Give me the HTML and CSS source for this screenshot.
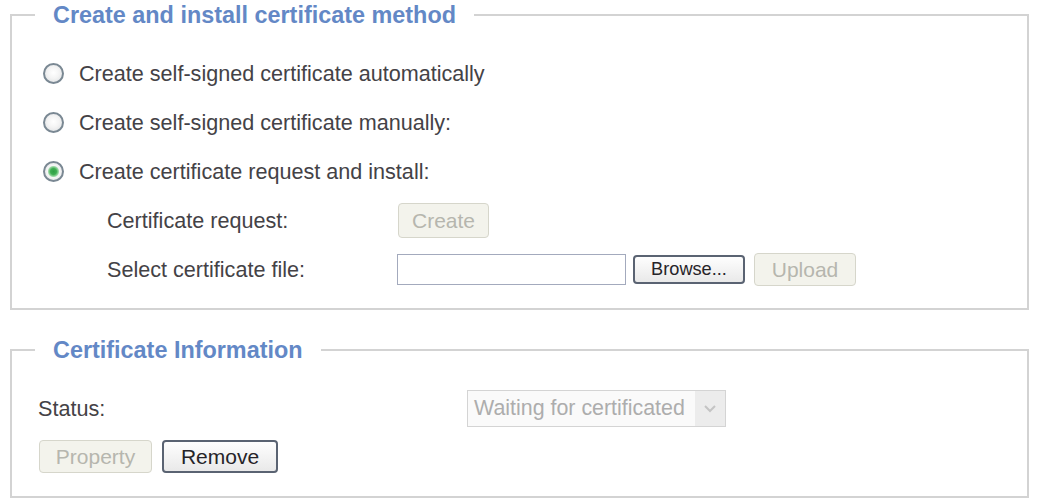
FILE: index.html
```html
<!DOCTYPE html>
<html lang="en">
<head>
<meta charset="utf-8">
<title>Certificate</title>
<link rel="stylesheet" href="styles.css">
</head>
<body>
<div class="page">
  <fieldset class="group group-method">
    <legend class="group-title">Create and install certificate method</legend>
    <div class="group-body method-body">
      <label class="radio-row"><input class="radio" type="radio" name="method"><span>Create self-signed certificate automatically</span></label>
      <label class="radio-row"><input class="radio" type="radio" name="method"><span>Create self-signed certificate manually:</span></label>
      <label class="radio-row"><input class="radio" type="radio" name="method" checked><span>Create certificate request and install:</span></label>
      <div class="sub-row">
        <span class="sub-label">Certificate request:</span>
        <button class="btn btn-disabled btn-create" disabled>Create</button>
      </div>
      <div class="sub-row">
        <span class="sub-label">Select certificate file:</span>
        <input class="file-text" type="text">
        <button class="btn btn-active btn-browse">Browse...</button>
        <button class="btn btn-disabled btn-upload" disabled>Upload</button>
      </div>
    </div>
  </fieldset>

  <fieldset class="group group-info">
    <legend class="group-title">Certificate Information</legend>
    <div class="group-body info-body">
      <div class="status-row">
        <span class="status-label">Status:</span>
        <div class="fake-select">
          <span class="fake-select-text">Waiting for certificated</span>
          <span class="fake-select-arrow"><svg width="14" height="10" viewBox="0 0 14 10"><path d="M2 2 L7 7 L12 2" fill="none" stroke="#c4c4c4" stroke-width="2"/></svg></span>
        </div>
      </div>
      <div class="button-row">
        <button class="btn btn-disabled btn-property" disabled>Property</button>
        <button class="btn btn-active btn-remove">Remove</button>
      </div>
    </div>
  </fieldset>
</div>
</body>
</html>
```

FILE: styles.css
```css
body {
  margin: 0;
  background: #ffffff;
  font-family: "Liberation Sans", Arial, sans-serif;
  color: #444246;
}

.page {
  padding: 1px 8px 0 10px;
}

.group {
  margin: 0;
  padding: 0;
  border: 2px solid #d3d3d3;
  min-width: 0;
}

.group-info {
  margin-top: 26px;
}

.group-title {
  margin-left: 23px;
  padding: 0 18px;
  font-size: 23.4px;
  line-height: 28px;
  font-weight: bold;
  color: #6388c6;
}

.method-body {
  padding: 20px 0 14px 31px;
}

.radio-row {
  display: flex;
  align-items: center;
  height: 49px;
  font-size: 21.6px;
}

.radio {
  appearance: none;
  -webkit-appearance: none;
  margin: 0 15px 0 0;
  width: 21px;
  height: 21px;
  border-radius: 50%;
  border: 2px solid #7a8893;
  background: radial-gradient(circle at 50% 45%, #ffffff 0, #f4f4f4 45%, #d9dcdf 100%);
  box-sizing: border-box;
  flex: none;
}

.radio:checked {
  background: radial-gradient(circle, #2f9e45 0, #3fae52 3px, #9bd8a5 5px, #f6f6f6 6px, #dcdfe1 100%);
}

.sub-row {
  display: flex;
  align-items: center;
  height: 49px;
  padding-left: 64px;
  font-size: 21.6px;
}

.sub-label {
  width: 290px;
  flex: none;
}

.btn {
  font-family: "Liberation Sans", Arial, sans-serif;
  font-size: 21px;
  padding: 0 17px;
  border-radius: 4px;
  box-sizing: border-box;
  height: 33px;
  line-height: 1;
}

.btn-disabled {
  background: #f3f3ec;
  border: 1px solid #d6d6cb;
  color: #b6b6ae;
}

.btn-active {
  background: linear-gradient(#fefefe, #e9e9e9);
  border: 2px solid #5a6372;
  color: #262428;
}

.btn-create {
  height: 35px;
  padding: 0 13px;
  margin-left: 1px;
}

.file-text {
  width: 229px;
  height: 31px;
  box-sizing: border-box;
  margin: 0 7px 0 0;
  border: 1px solid #a3aabd;
  background: #ffffff;
}

.btn-browse {
  width: 112px;
  height: 29px;
  padding: 0;
  font-size: 18.2px;
  margin-right: 9px;
}

.btn-upload {
  width: 102px;
  padding: 0;
}

.info-body {
  padding: 26px 0 23px 26px;
}

.status-row {
  display: flex;
  align-items: center;
  height: 37px;
  font-size: 21.6px;
}

.status-label {
  width: 429px;
  flex: none;
}

.fake-select {
  display: flex;
  width: 259px;
  height: 37px;
  box-sizing: border-box;
  border: 1px solid #d4d4d4;
  background: #fafafa;
}

.fake-select-text {
  flex: 1;
  padding-left: 6px;
  line-height: 35px;
  color: #adadad;
  font-size: 21.4px;
  white-space: nowrap;
  overflow: hidden;
}

.fake-select-arrow {
  width: 30px;
  display: flex;
  align-items: center;
  justify-content: center;
  background: #ececec;
}

.button-row {
  display: flex;
  gap: 10px;
  margin-top: 13px;
  padding-left: 1px;
}

.btn-property {
  width: 113px;
  padding: 0;
}

.btn-remove {
  width: 116px;
  padding: 0;
}
```
